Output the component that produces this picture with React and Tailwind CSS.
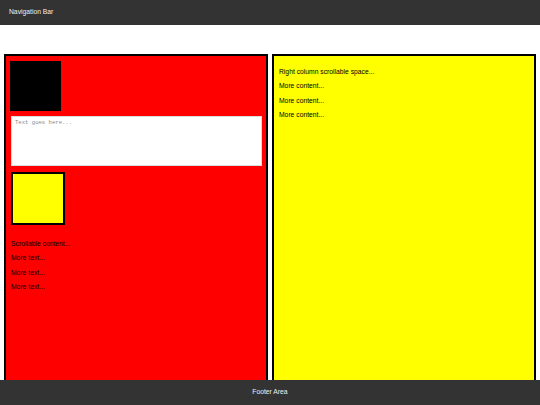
import React from 'react';

const font = { fontFamily: '"Liberation Sans", Arial, sans-serif' };

const App = () => {
  return (
    <div className="relative h-[405px] overflow-hidden bg-white flex flex-col" style={font}>
      <nav className="h-[25px] shrink-0 bg-[#333333] text-[#f0f0f0] text-[6.75px] flex items-center px-[9px]">
        Navigation Bar
      </nav>

      <main className="flex-1 flex gap-[4px] pt-[29px] px-[4px]">
        {/* left column */}
        <div className="flex-1 border-2 border-black bg-[#ff0000] pt-[5px] px-[4px] flex flex-col items-start">
          <div className="w-[51px] h-[50px] bg-black" />
          <textarea
            placeholder="Text goes here..."
            className="mt-[5px] ml-[1px] w-[251px] h-[50px] bg-white border border-[#dddddd] resize-none px-[3px] py-[2px] text-[5.6px] leading-[7px] placeholder-[#888888] outline-none"
            style={{ fontFamily: '"Liberation Mono", "DejaVu Sans Mono", monospace' }}
          />
          <div className="mt-[6px] ml-[1px] w-[54px] h-[53px] bg-[#ffff00] border-2 border-black" />
          <div className="mt-[15px] ml-[1px] flex flex-col gap-[6.7px] text-[6.75px] leading-[7.6px] text-black">
            <p>Scrollable content...</p>
            <p>More text...</p>
            <p>More text...</p>
            <p>More text...</p>
          </div>
        </div>

        {/* right column */}
        <div className="flex-1 border-2 border-black bg-[#ffff00] pt-[12px] px-[5px]">
          <div className="flex flex-col gap-[6.7px] text-[6.75px] leading-[7.6px] text-black">
            <p>Right column scrollable space...</p>
            <p>More content...</p>
            <p>More content...</p>
            <p>More content...</p>
          </div>
        </div>
      </main>

      <footer className="absolute bottom-0 left-0 right-0 h-[25px] bg-[#333333] text-[#f0f0f0] text-[6.75px] flex items-center justify-center">
        Footer Area
      </footer>
    </div>
  );
};

export default App;
